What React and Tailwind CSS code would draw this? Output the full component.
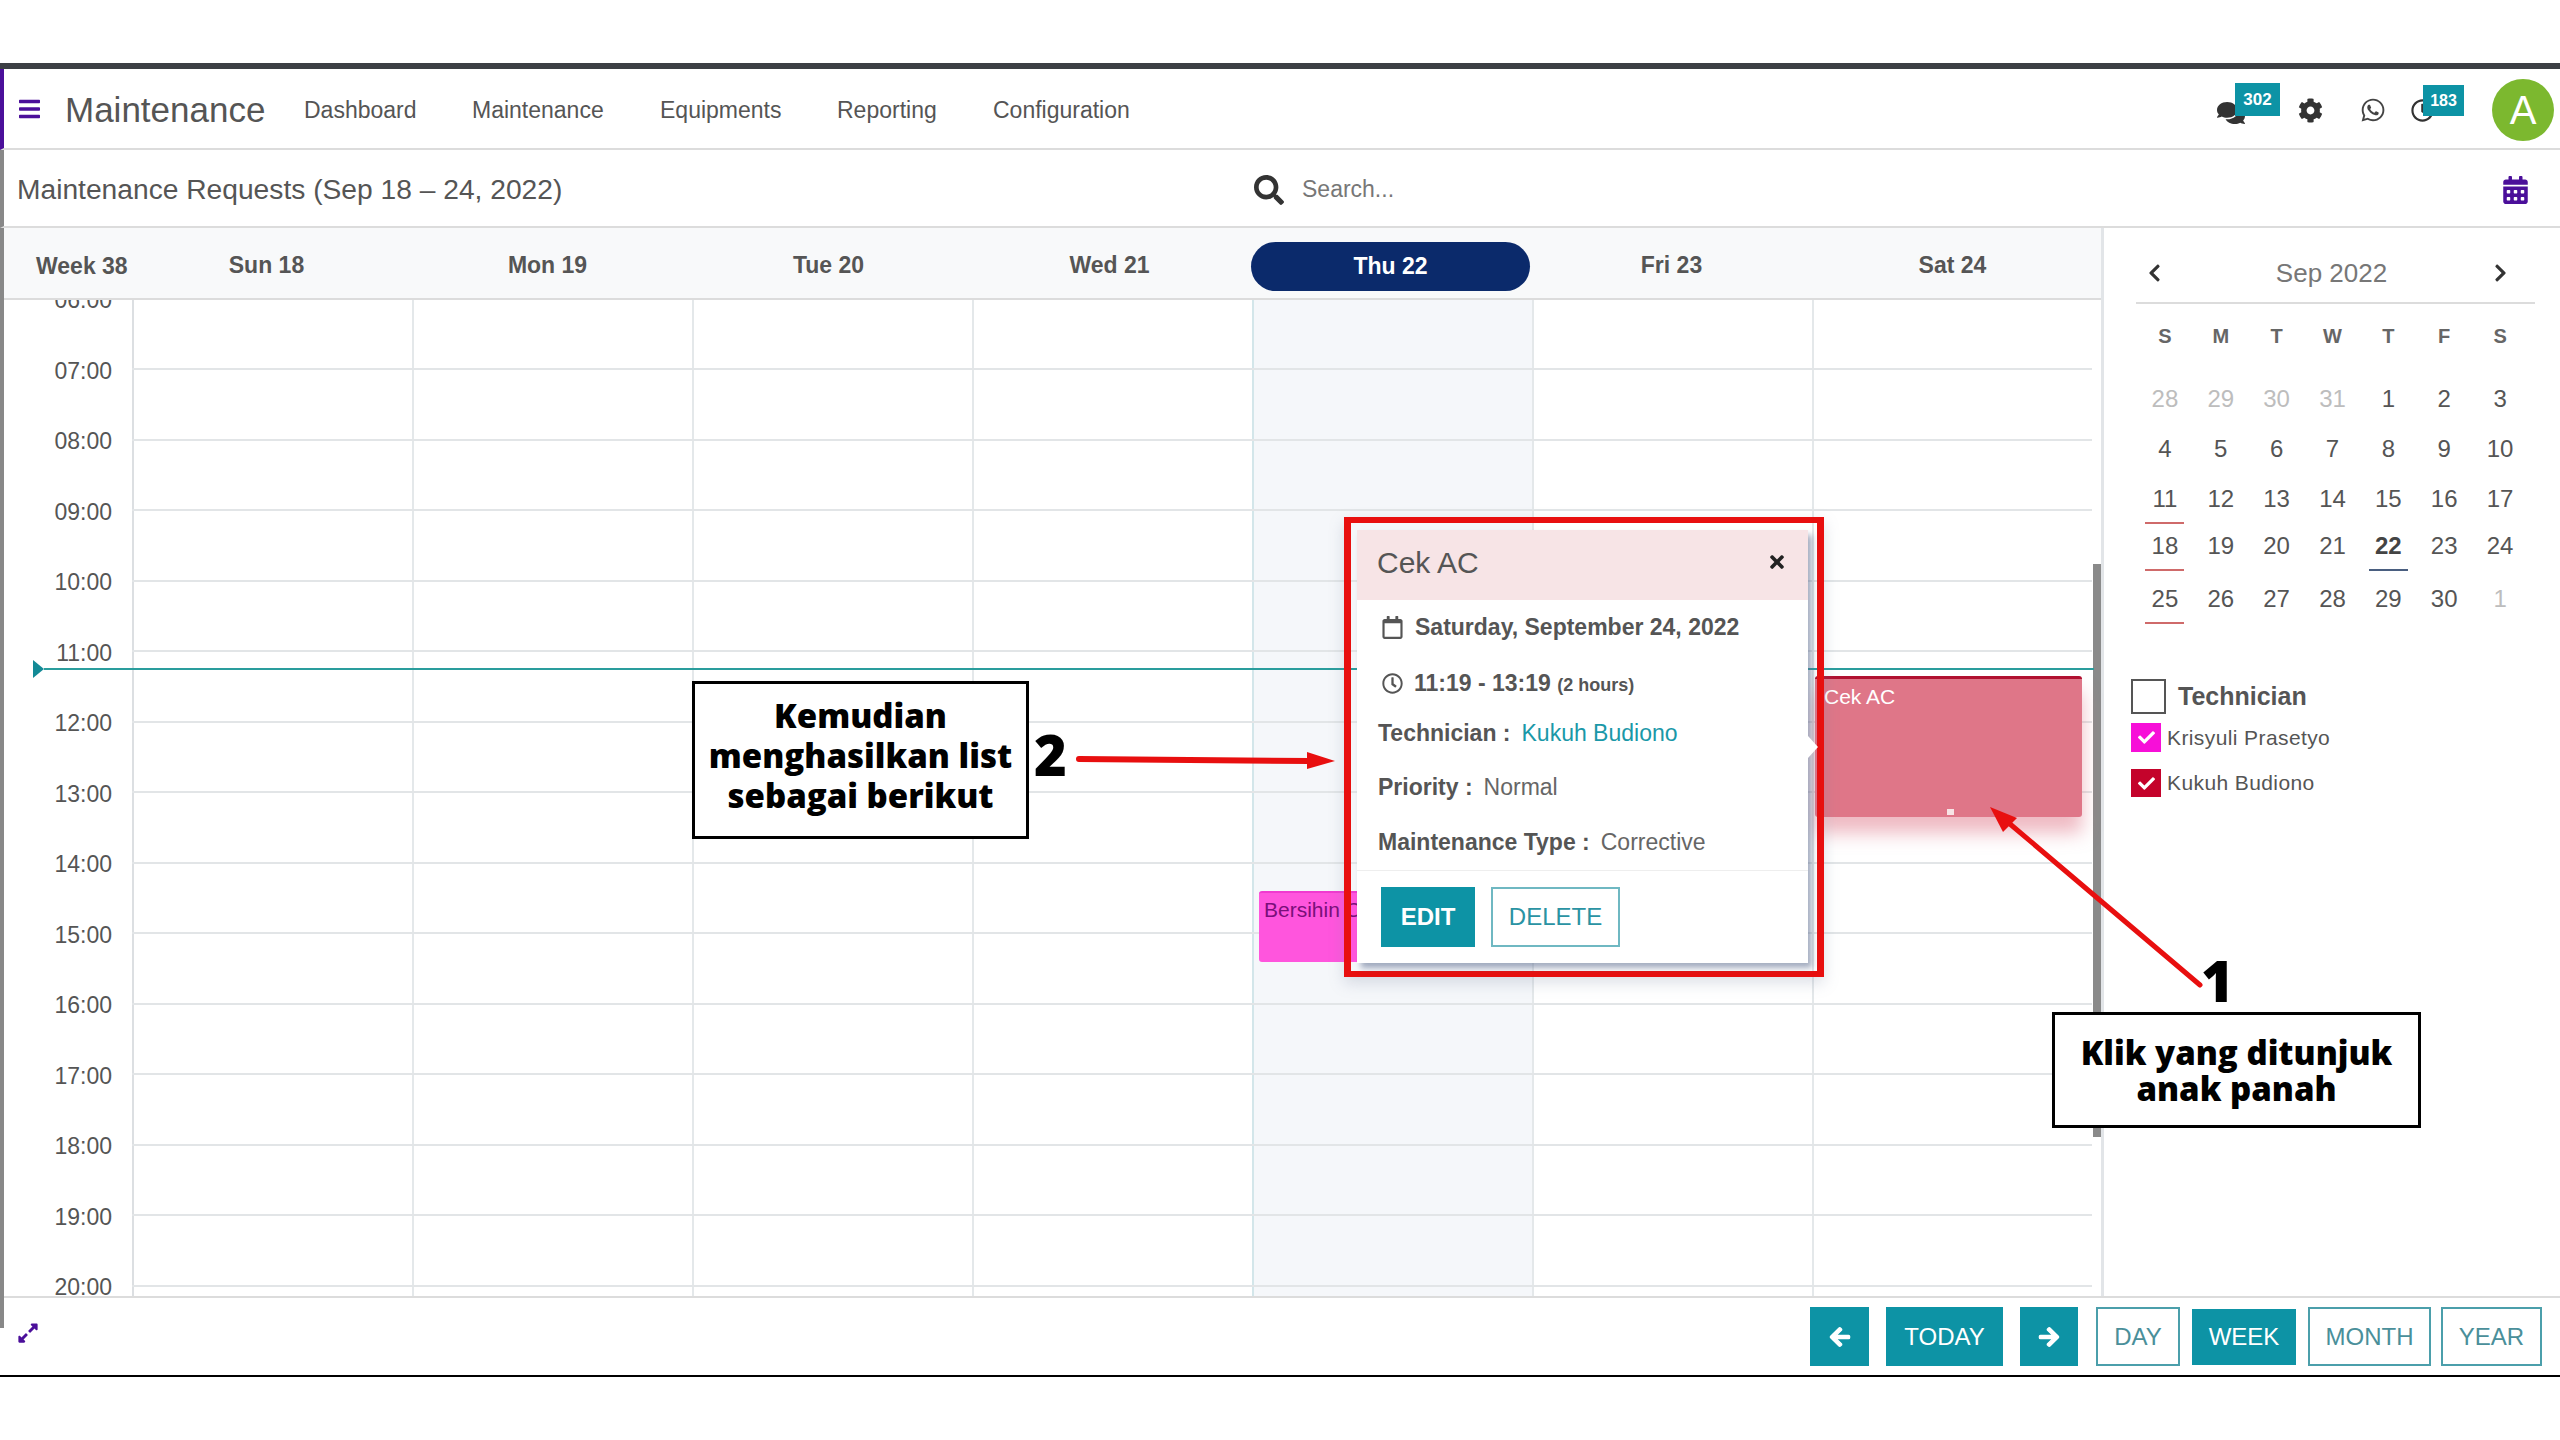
import { FaCog, FaWhatsapp, FaRegClock, FaComments, FaSearch, FaChevronLeft, FaChevronRight, FaCheck, FaTimes, FaRegCalendar, FaCalendarAlt, FaBars, FaArrowLeft, FaArrowRight, FaExpandAlt } from 'react-icons/fa';

const SANS = "font-['Liberation_Sans',Arial,sans-serif]";
const HOURS = ['07:00', '08:00', '09:00', '10:00', '11:00', '12:00', '13:00', '14:00', '15:00', '16:00', '17:00', '18:00', '19:00', '20:00'];
const DAYS = [
  { label: 'Sun 18' },
  { label: 'Mon 19' },
  { label: 'Tue 20' },
  { label: 'Wed 21' },
  { label: 'Thu 22', today: true },
  { label: 'Fri 23' },
  { label: 'Sat 24' },
];
const NAV = [
  { label: 'Dashboard', cls: 'w-[168px]' },
  { label: 'Maintenance', cls: 'w-[188px]' },
  { label: 'Equipments', cls: 'w-[177px]' },
  { label: 'Reporting', cls: 'w-[156px]' },
  { label: 'Configuration', cls: 'w-[140px]' },
];
const WEEK = [
  { h: 'h-[50px]', days: [['28', 1], ['29', 1], ['30', 1], ['31', 1], ['1'], ['2'], ['3']] },
  { h: 'h-[50px]', days: [['4'], ['5'], ['6'], ['7'], ['8'], ['9'], ['10']] },
  { h: 'h-[47px]', days: [['11', 0, 'red'], ['12'], ['13'], ['14'], ['15'], ['16'], ['17']] },
  { h: 'h-[53px]', days: [['18', 0, 'red'], ['19'], ['20'], ['21'], ['22', 0, 'today'], ['23'], ['24']] },
  { h: 'h-[48px]', days: [['25', 0, 'red'], ['26'], ['27'], ['28'], ['29'], ['30'], ['1', 1]] },
];

function CalDay({ value, muted, mark }) {
  return (
    <div className="flex justify-center">
      <span
        className={`flex h-[48px] w-[39px] items-center justify-center border-b-2 text-[24px] ${
          mark === 'red' ? 'border-[#cf6a6a]' : mark === 'today' ? 'border-[#4a5f80]' : 'border-transparent'
        } ${muted ? 'text-[#bdbdbd]' : mark === 'today' ? 'font-bold text-[#444]' : 'text-[#555]'}`}
      >
        {value}
      </span>
    </div>
  );
}

function Popup() {
  return (
    <div className="absolute left-[1344px] top-[517px] z-20 h-[460px] w-[480px] border-x-[7px] border-y-[6px] border-[#e80f0f] px-[6px] pt-[7px] shadow-[0_6px_14px_rgba(120,130,160,0.25)]">
      <div className="relative h-[433px] w-[451px] bg-white shadow-[4px_5px_6px_rgba(90,105,140,0.55)]">
        <div className="flex h-[70px] items-center justify-between bg-[#f7e4e6] pb-[6px] pl-[20px] pr-[21px]">
          <span className="text-[30px] text-[#555]">Cek AC</span>
          <FaTimes className="h-[20px] w-[20px] text-[#222]" />
        </div>
        <div className="flex h-[54px] items-center gap-[12px] pl-[25px] text-[23px] font-bold text-[#555]">
          <FaRegCalendar className="h-[23px] w-[21px]" />
          <span>Saturday, September 24, 2022</span>
        </div>
        <div className="flex h-[58px] items-center gap-[11px] pl-[25px] text-[23px] font-bold text-[#555]">
          <FaRegClock className="h-[21px] w-[21px]" />
          <span>
            11:19 - 13:19 <span className="text-[18px]">(2 hours)</span>
          </span>
        </div>
        <div className="flex h-[42px] items-center gap-[11px] pl-[21px] text-[23px]">
          <span className="font-bold text-[#555]">Technician :</span>
          <span className="text-[#1a98a8]">Kukuh Budiono</span>
        </div>
        <div className="flex h-[66px] items-center gap-[11px] pl-[21px] text-[23px]">
          <span className="font-bold text-[#555]">Priority :</span>
          <span className="text-[#666]">Normal</span>
        </div>
        <div className="flex h-[44px] items-center gap-[11px] pl-[21px] text-[23px]">
          <span className="font-bold text-[#555]">Maintenance Type :</span>
          <span className="text-[#666]">Corrective</span>
        </div>
        <div className="mt-[6px] flex gap-[16px] border-t border-[#eee] pl-[24px] pt-[16px]">
          <button className="h-[60px] w-[94px] bg-[#0d93a5] text-[24px] font-bold text-white">EDIT</button>
          <button className="h-[60px] w-[129px] border-2 border-[#6fb8c2] bg-white text-[24px] text-[#2a93a3]">DELETE</button>
        </div>
        <div className="absolute right-[-10px] top-[206px] h-0 w-0 border-y-[11px] border-l-[10px] border-y-transparent border-l-white" />
      </div>
    </div>
  );
}

function Annotations() {
  return (
    <div className="font-['Open_Sans',sans-serif] text-black">
      <div className="absolute left-[692px] top-[681px] z-30 flex h-[158px] w-[337px] flex-col items-center justify-center border-[3px] border-black bg-white pb-[8px] text-center text-[33px] font-extrabold leading-[40px]">
        <span>Kemudian</span>
        <span>menghasilkan list</span>
        <span>sebagai berikut</span>
      </div>
      <span className="absolute left-[1034px] top-[726px] z-30 text-[56px] font-extrabold leading-[56px]">2</span>
      <span className="absolute left-[2201px] top-[952px] z-30 text-[56px] font-extrabold leading-[56px]">1</span>
      <div className="absolute left-[2052px] top-[1012px] z-30 flex h-[116px] w-[369px] flex-col items-center justify-center border-[3px] border-black bg-white pt-[2px] text-center text-[33px] font-extrabold leading-[36px]">
        <span>Klik yang ditunjuk</span>
        <span>anak panah</span>
      </div>
      <svg className="absolute left-0 top-0 z-30 h-[1440px] w-[2560px]" viewBox="0 0 2560 1440" fill="none">
        <path d="M1079 759L1310 761" stroke="#e80f0f" strokeWidth="6" strokeLinecap="round" />
        <path d="M1335 761L1307 752L1307 769Z" fill="#e80f0f" />
        <path d="M2200 985L2010 824" stroke="#e80f0f" strokeWidth="5" strokeLinecap="round" />
        <path d="M1990 807L2017 818L2003 832Z" fill="#e80f0f" />
      </svg>
    </div>
  );
}

export default function App() {
  return (
    <div className={`relative h-[1440px] w-[2560px] overflow-hidden bg-white ${SANS}`}>
      <div className="h-[63px]" />
      <div className="h-[6px] bg-[#3c3f44]" />

      {/* top nav */}
      <div className="flex h-[81px] items-center border-b-2 border-[#dcdcdc] border-l-4 border-l-[#4b0f9a] pt-[3px]">
        <FaBars className="ml-[14px] mb-[3px] h-[24px] w-[23px] text-[#4b0f9a]" />
        <span className="ml-[24px] w-[239px] text-[35px] text-[#555]">Maintenance</span>
        {NAV.map((n) => (
          <span key={n.label} className={`${n.cls} text-[23px] text-[#555]`}>
            {n.label}
          </span>
        ))}
        <div className="ml-auto flex items-center pr-[6px]">
          <div className="relative h-[40px] w-[81px]">
            <FaComments className="absolute left-0 top-[10px] h-[26px] w-[28px] text-[#333]" />
            <span className="absolute left-[18px] top-[-7px] flex h-[33px] w-[45px] items-center justify-center bg-[#0d93a5] text-[17px] font-bold text-white">302</span>
          </div>
          <FaCog className="h-[25px] w-[25px] text-[#333]" />
          <FaWhatsapp className="ml-[37px] h-[26px] w-[26px] text-[#444]" />
          <div className="relative ml-[25px] h-[40px] w-[81px]">
            <FaRegClock className="absolute left-0 top-[9px] h-[23px] w-[23px] text-[#333]" />
            <span className="absolute left-[12px] top-[-5px] flex h-[31px] w-[41px] items-center justify-center bg-[#0d93a5] text-[16px] font-bold text-white">183</span>
          </div>
          <div className="flex h-[62px] w-[62px] items-center justify-center rounded-full bg-[#7cb82f] text-[40px] text-white">A</div>
        </div>
      </div>

      {/* title + search */}
      <div className="flex h-[78px] items-center border-b-2 border-[#dcdcdc] border-l-4 border-l-[#888] pt-[3px]">
        <span className="ml-[13px] w-[1237px] text-[28.2px] text-[#555]">Maintenance Requests (Sep 18 – 24, 2022)</span>
        <FaSearch className="h-[30px] w-[30px] text-[#333]" />
        <span className="ml-[18px] text-[23px] text-[#777]">Search...</span>
        <FaCalendarAlt className="ml-auto mr-[32px] h-[28px] w-[25px] text-[#4b0f9a]" />
      </div>

      <div className="flex h-[1068px] border-l-4 border-l-[#888]">
        {/* calendar */}
        <div className="relative w-[2100px] border-r-[3px] border-[#e2e5e8]">
          <div className="flex h-[72px] items-center border-b-2 border-[#dcdcdc] bg-[#f8f9fa] pt-[6px] text-[23px] font-bold text-[#555]">
            <div className="w-[122px] whitespace-nowrap pl-[32px] pr-[2px] text-center">Week 38</div>
            {DAYS.map((d) => (
              <div key={d.label} className="flex w-[281px] -translate-y-[1px] justify-center">
                {d.today ? (
                  <span className="flex h-[49px] w-[279px] translate-y-[1px] items-center justify-center rounded-full bg-[#0b2a6b] text-white">{d.label}</span>
                ) : (
                  d.label
                )}
              </div>
            ))}
          </div>
          <div className="relative h-[996px] overflow-hidden">
            <div className="absolute bottom-0 left-[128px] top-0 flex">
              {DAYS.map((d) => (
                <div key={d.label} className={`w-[280px] border-l-2 ${d.today ? 'border-[#d3e6ea] bg-[#f5f7fa]' : 'border-[#e4e8ea]'}`} />
              ))}
            </div>
            <div className="absolute bottom-0 left-[128px] top-0 w-[2px] bg-[#dcdfe2]" />
            <div className="absolute left-0 right-[9px] top-[-37px]">
              <div className="flex h-[71px] items-center">
                <span className="w-[108px] pt-[3px] text-right text-[23px] text-[#555]">06:00</span>
              </div>
              {HOURS.map((h) => (
                <div key={h} className="flex h-[70.5px] items-center">
                  <span className="w-[108px] pt-[3px] text-right text-[23px] text-[#555]">{h}</span>
                  <div className="ml-[20px] h-[2px] flex-1 bg-[#e2e5e7]" />
                </div>
              ))}
            </div>
            <div className="absolute right-0 top-[264px] h-[573px] w-[8px] bg-[#8a8a8a]" />
          </div>
        </div>

        {/* sidebar */}
        <div className="flex-1 pl-[27px]">
          <div className="ml-[5px] mr-[25px] flex h-[76px] items-center justify-between border-b-2 border-[#dcdcdc] pl-[11px] pr-[27px] pt-[16px] text-[#333]">
            <FaChevronLeft className="h-[20px] w-[15px]" />
            <span className="ml-[8px] text-[26px] text-[#777]">Sep 2022</span>
            <FaChevronRight className="h-[20px] w-[15px]" />
          </div>
          <div className="w-[397px] pl-[6px]">
            <div className="grid h-[60px] grid-cols-7 items-center pt-[3px] text-center text-[20px] font-bold text-[#666]">
              {['S', 'M', 'T', 'W', 'T', 'F', 'S'].map((d, i) => (
                <span key={i}>{d}</span>
              ))}
            </div>
            <div className="h-[12px]" />
            {WEEK.map((row, i) => (
              <div key={i} className={`grid ${row.h} grid-cols-7`}>
                {row.days.map(([v, muted, mark], j) => (
                  <CalDay key={j} value={v} muted={muted} mark={mark} />
                ))}
              </div>
            ))}
          </div>
          <div className="mt-[55px] flex h-[35px] items-center">
            <span className="h-[35px] w-[35px] border-2 border-[#555]" />
            <span className="ml-[12px] text-[25px] font-bold text-[#555]">Technician</span>
          </div>
          <div className="mt-[9px] flex h-[29px] items-center text-[21px] tracking-[0.4px] text-[#555]">
            <span className="flex h-[29px] w-[30px] items-center justify-center bg-[#f70fd8]">
              <FaCheck className="h-[17px] w-[17px] text-white" />
            </span>
            <span className="ml-[6px]">Krisyuli Prasetyo</span>
          </div>
          <div className="mt-[17px] flex h-[28px] items-center text-[21px] tracking-[0.4px] text-[#555]">
            <span className="flex h-[28px] w-[30px] items-center justify-center bg-[#c4032b]">
              <FaCheck className="h-[17px] w-[17px] text-white" />
            </span>
            <span className="ml-[6px]">Kukuh Budiono</span>
          </div>
        </div>
      </div>

      {/* footer */}
      <div className="flex h-[79px] items-center border-t-2 border-[#dcdcdc] pl-[17px] pr-[18px] text-[24px]">
        <FaExpandAlt className="mb-[8px] h-[22px] w-[22px] text-[#4b0f9a]" />
        <div className="ml-auto flex items-center">
          <button className="flex h-[59px] w-[59px] items-center justify-center bg-[#0d93a5] text-white"><FaArrowLeft className="h-[22px] w-[22px] stroke-current stroke-[30]" /></button>
          <button className="ml-[17px] h-[59px] w-[117px] bg-[#0d93a5] text-white">TODAY</button>
          <button className="ml-[17px] flex h-[59px] w-[58px] items-center justify-center bg-[#0d93a5] text-white"><FaArrowRight className="h-[22px] w-[22px] stroke-current stroke-[30]" /></button>
          <button className="ml-[18px] h-[59px] w-[84px] border-2 border-[#4b9fab] text-[#4a8f9a]">DAY</button>
          <button className="ml-[12px] h-[56px] w-[104px] bg-[#0d93a5] text-white">WEEK</button>
          <button className="ml-[12px] h-[59px] w-[123px] border-2 border-[#4b9fab] text-[#4a8f9a]">MONTH</button>
          <button className="ml-[10px] h-[59px] w-[101px] border-2 border-[#4b9fab] text-[#4a8f9a]">YEAR</button>
        </div>
      </div>
      <div className="h-[2px] bg-black" />
      <div className="absolute left-0 top-[1296px] h-[32px] w-[4px] bg-[#888]" />

      {/* events, over the grid */}
      <div className="absolute left-[1259px] top-[891px] z-10 h-[71px] w-[110px] rounded-[3px] border-t-2 border-[#f03ad0] bg-[#ff55dd] pl-[5px] pt-[4px] text-[21px] leading-[26px] text-[#7a0f7a]">
        <span className="whitespace-nowrap">Bersihin Cek</span>
      </div>
      <div className="absolute left-[1815px] top-[676px] z-10 h-[141px] w-[267px] rounded-[3px] border-t-[3px] border-[#b01030] bg-[#df7688] pl-[9px] pt-[5px] text-[21px] leading-[26px] text-white shadow-[0_16px_18px_rgba(223,118,136,0.5)]">
        Cek AC
        <div className="absolute bottom-[2px] left-[132px] h-[6px] w-[7px] bg-[#f7e4e6]" />
      </div>
      {/* now line */}
      <div className="absolute left-[44px] top-[668px] z-[5] h-[2px] w-[2050px] bg-[#2a9d9d]" />
      <div className="absolute left-[33px] top-[660px] z-[5] h-0 w-0 border-y-[9px] border-l-[11px] border-y-transparent border-l-[#138a96]" />

      <Popup />
      <Annotations />
    </div>
  );
}
